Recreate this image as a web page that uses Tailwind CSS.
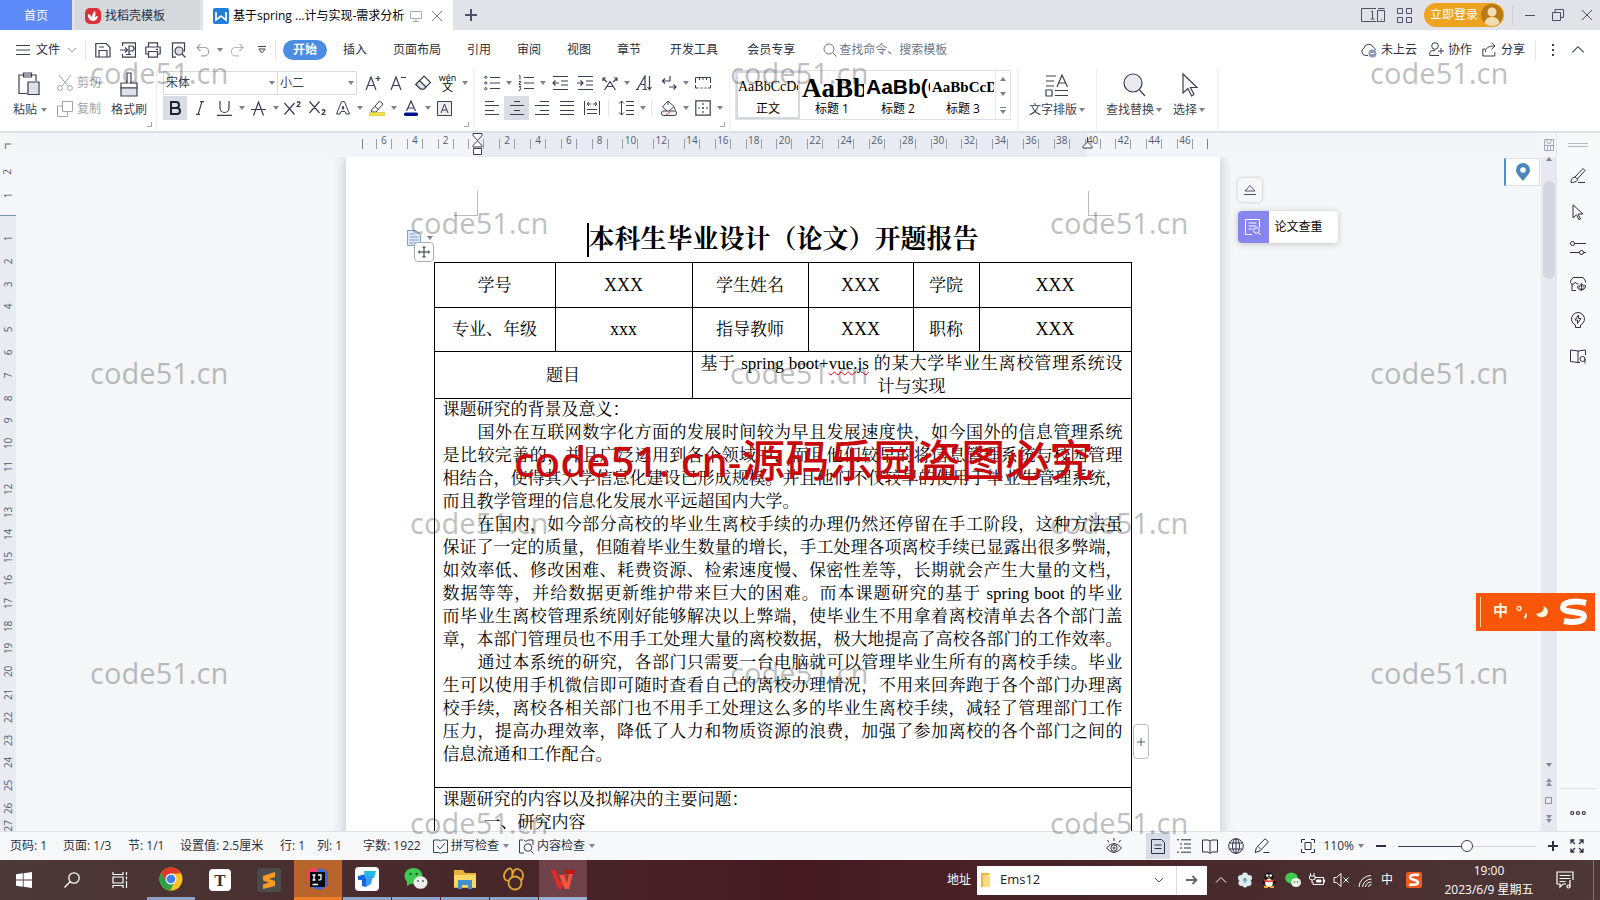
<!DOCTYPE html>
<html lang="zh-CN">
<head>
<meta charset="utf-8">
<title>基于spring ...计与实现-需求分析</title>
<script src="https://cdn.jsdelivr.net/npm/@tailwindcss/browser@4"></script>
</head>
<body class="h-screen overflow-hidden bg-[#f5f6f8] font-['Open_Sans','Noto_Sans_CJK_SC',sans-serif] text-xs text-[#2b3042]">
<svg class="hidden" aria-hidden="true">
  <defs>
    <symbol id="tri" viewBox="0 0 6 4"><path d="M0 0h6L3 4z" fill="#7d8290"/></symbol>
    <symbol id="chev" viewBox="0 0 12 8"><path d="M1 1.500l5 5 5-5" fill="none" stroke="currentColor"/></symbol>
    <symbol id="launch" viewBox="0 0 6 6"><path d="M0 5.500h5.500V0" fill="none" stroke="#7d8290"/></symbol>
  </defs>
</svg>

<div class="relative flex h-screen flex-col overflow-hidden">

<!-- Tab strip -->
<header class="flex h-[30px] shrink-0 items-stretch bg-[#e1e3e8]">
  <button class="w-18 bg-[#5f8afa] pt-px text-white">首页</button>
  <button class="ml-[3px] flex w-[125px] items-center gap-1 bg-[#d6d8dc] pl-[10px] pt-px">
    <svg class="size-4" viewBox="0 0 16 16"><rect width="16" height="16" rx="5" fill="#dd3038"/><path d="M7.500 13C4 12 2.500 9 3 6c2 .5 3.500 2 4 4 0-3 .5-5 3-7 1 3 .5 5-1 7 1.500-1.500 2.500-2 4-2-.5 3-2.500 5-5.500 5z" fill="#fff"/></svg>
    找稻壳模板
  </button>
  <div class="ml-[3px] flex w-[250px] items-center bg-white pl-[10px] pt-px">
    <svg class="size-4 shrink-0" viewBox="0 0 16 16"><rect width="16" height="16" rx="2" fill="#1f7fd6"/><path d="M3 4v8l5-4 5 4V4" fill="none" stroke="#fff" stroke-width="1.700"/></svg>
    <span class="ml-1 whitespace-nowrap text-black">基于spring ...计与实现-需求分析</span>
    <svg class="ml-[6px] size-3 shrink-0 text-[#a7abb5]" viewBox="0 0 12 12" fill="none" stroke="currentColor"><path d="M.5 1.500h11v7H.5zM6 8.500v3M3 11.500h6"/></svg>
    <button class="ml-auto mr-[10px]" aria-label="关闭标签"><svg class="size-3 text-[#7d8290]" viewBox="0 0 12 12"><path d="M1 1l10 10M11 1L1 11" stroke="currentColor"/></svg></button>
  </div>
  <button class="grid w-9 place-items-center" aria-label="新建标签"><svg class="size-3" viewBox="0 0 12 12"><path d="M6 0v12M0 6h12" stroke="#4a5068" stroke-width="2"/></svg></button>
  <div class="ml-auto flex items-center text-[#4a5068]">
    <button aria-label="窗口布局"><svg class="h-[14px] w-6" viewBox="0 0 24 14" fill="none" stroke="currentColor"><path d="M15 .5H.5v13h15M10 4l1.500-1v8M9.500 11h4M16.500 2.500h7v11h-7zM17 .5h6.500M20 11.500h1"/></svg></button>
    <button class="ml-3" aria-label="应用"><svg class="size-[15px]" viewBox="0 0 15 15" fill="none" stroke="currentColor"><path d="M.5.5h5v5h-5zM9.500.5h5v5h-5zM.5 9.500h5v5h-5zM9.500 9.500h5v5h-5z"/></svg></button>
    <button class="ml-3 flex h-6 w-20 items-center justify-between rounded-full bg-[#eea320] pl-[6px] pr-px text-white">立即登录
      <svg class="size-[22px]" viewBox="0 0 22 22"><circle cx="11" cy="11" r="11" fill="#b87a17"/><circle cx="11" cy="8" r="4.500" fill="#f2dcb2"/><path d="M3.500 19c1-8 14-8 15 0-4 4-11 4-15 0z" fill="#f2dcb2"/></svg>
    </button>
    <span class="ml-2 h-5 w-px bg-[#cfd1d7]"></span>
    <button class="ml-3 w-[10px]" aria-label="最小化"><svg class="h-3 w-[10px]" viewBox="0 0 10 12"><path d="M0 6.500h10" stroke="currentColor"/></svg></button>
    <button class="ml-[17px]" aria-label="还原"><svg class="size-3" viewBox="0 0 12 12" fill="none" stroke="currentColor"><path d="M.5 3.500h8v8h-8zM3 3.500v-3h8.500v8h-3"/></svg></button>
    <button class="ml-[17px] mr-[7px]" aria-label="关闭"><svg class="size-3" viewBox="0 0 12 12"><path d="M1 1l10 10M11 1L1 11" stroke="currentColor"/></svg></button>
  </div>
</header>

<!-- Menu bar -->
<nav class="flex h-[39px] shrink-0 items-center bg-white">
  <button class="ml-4 flex items-center gap-[6px]"><svg class="h-3 w-[14px]" viewBox="0 0 14 12"><path d="M0 1.500h14M0 6h14M0 10.500h14" stroke="#3a3f52"/></svg>文件<svg class="ml-px h-2 w-[10px] text-[#8b90a0]"><use href="#chev"/></svg></button>
  <span class="ml-2 h-5 w-px bg-[#e3e5e9]"></span>
  <div class="flex text-[#3a3f52]">
    <button class="ml-1 grid w-[25px] place-items-center" aria-label="保存"><svg class="size-4" viewBox="0 0 16 16" fill="none" stroke="currentColor" stroke-width="1.200"><path d="M.8 1.500h10.500l3.700 4v9.500H.8zM4 15V8.500h8V15M4 5h5"/></svg></button>
    <button class="grid w-[25px] place-items-center" aria-label="输出为PDF"><svg class="size-4" viewBox="0 0 16 16" fill="none" stroke="currentColor" stroke-width="1.200"><path d="M2.500 4V.8h13v14.400h-13V12M0 8h7M5 5.500L7.500 8 5 10.500M9 12.500V4h2.500a2 2 0 010 5H9M6 12.500h5"/></svg></button>
    <button class="grid w-[25px] place-items-center" aria-label="打印"><svg class="size-4" viewBox="0 0 16 16" fill="none" stroke="currentColor" stroke-width="1.200"><path d="M3.500 5V.8h9V5M3.500 12H.8V5h14.400v7h-2.700M3.500 9.500h9v5.700h-9zM11 7.300h2"/></svg></button>
    <button class="grid w-[25px] place-items-center" aria-label="打印预览"><svg class="size-4" viewBox="0 0 16 16" fill="none" stroke="currentColor" stroke-width="1.200"><path d="M6 15.200H2.500V.8h12v9"/><circle cx="9" cy="9" r="4" fill="#d9dce3"/><path d="M12 12l3.500 3.500"/></svg></button>
    <button class="grid w-[25px] place-items-center text-[#a2a5b0]" aria-label="撤销"><svg class="size-[14px]" viewBox="0 0 14 14" fill="none" stroke="currentColor" stroke-width="1.200"><path d="M4.500.8L1 4.500l3.500 3.500M1 4.500h7.500a4 4 0 010 8.300H5"/></svg></button>
    <button class="grid w-[9px] place-items-center" aria-label="撤销列表"><svg class="h-1 w-[6px]"><use href="#tri"/></svg></button>
    <button class="grid w-[25px] place-items-center text-[#b6b9c1]" aria-label="恢复"><svg class="size-[14px]" viewBox="0 0 14 14" fill="none" stroke="currentColor" stroke-width="1.200"><path d="M9.500.8L13 4.500 9.500 8M13 4.500H5.500a4 4 0 000 8.300H9"/></svg></button>
    <button class="grid w-[25px] place-items-center" aria-label="自定义"><svg class="h-2 w-2" viewBox="0 0 8 8" fill="none" stroke="currentColor"><path d="M0 .5h8M.8 3h6.400L4 6.800z"/></svg></button>
  </div>
  <span class="ml-px h-5 w-px bg-[#e3e5e9]"></span>
  <button class="ml-[7px] h-5 w-11 rounded-full bg-[#4a8de2] font-bold text-white">开始</button>
  <button class="ml-4">插入</button>
  <button class="ml-[26px]">页面布局</button>
  <button class="ml-[26px]">引用</button>
  <button class="ml-[26px]">审阅</button>
  <button class="ml-[26px]">视图</button>
  <button class="ml-[26px]">章节</button>
  <button class="ml-[29px]">开发工具</button>
  <button class="ml-[29px]">会员专享</button>
  <label class="ml-7 flex items-center gap-[2px] text-[#71778a]"><svg class="size-[14px]" viewBox="0 0 14 14" fill="none" stroke="currentColor"><circle cx="6" cy="6" r="5"/><path d="M9.500 9.500l4 4"/></svg><input class="w-32 bg-transparent outline-none placeholder:text-[#71778a]" placeholder="查找命令、搜索模板" aria-label="查找命令、搜索模板"></label>
  <div class="ml-auto flex items-center">
    <button class="flex items-center gap-1"><svg class="size-4" viewBox="0 0 16 16" fill="none"><path d="M7 13.500H4.500A4 4 0 013 6a5 5 0 019.500-.5A3.500 3.500 0 0114.500 8" stroke="#3a3f52"/><circle cx="11.500" cy="11.500" r="4" fill="#8d99b8"/><path d="M9.500 11.500h4" stroke="#fff"/></svg>未上云</button>
    <button class="ml-3 flex items-center gap-1"><svg class="size-[15px]" viewBox="0 0 15 15" fill="none" stroke="#3a3f52"><circle cx="6" cy="4" r="3.300"/><path d="M10 13.500H.8V11c0-2 2-2.500 5.200-2.500M12 6v6M9 9h6"/></svg>协作</button>
    <button class="ml-[10px] flex items-center gap-1"><svg class="size-[15px]" viewBox="0 0 15 15" fill="none" stroke="#3a3f52"><path d="M3.500 7H.8v7h12v-4M3.500 10c0-4 3-6 9-6M9.500.8L13 4 9.500 7.500"/></svg>分享</button>
    <span class="ml-[10px] h-5 w-px bg-[#e3e5e9]"></span>
    <button class="ml-[15px]" aria-label="更多"><svg class="h-3 w-1" viewBox="0 0 4 12" fill="#3a3f52"><path d="M1 0h2v2H1zM1 5h2v2H1zM1 10h2v2H1z"/></svg></button>
    <button class="ml-4 mr-[15px]" aria-label="收起功能区"><svg class="h-[9px] w-[14px] rotate-180 text-[#3a3f52]"><use href="#chev"/></svg></button>
  </div>
</nav>

<!-- Ribbon -->
<section class="flex h-16 shrink-0 border-b-2 border-[#dfe1e5] bg-white text-[#3a3f52]">
  <div class="relative flex w-[156px] pl-[13px] pt-[3px]">
    <button class="flex w-[34px] flex-col items-start"><svg class="ml-[5px] h-6 w-[22px]" viewBox="0 0 22 24" fill="none" stroke="currentColor" stroke-width="1.200"><path d="M9 21.500H1V3h17v6M5.500 1h8v4h-8z"/><path d="M10 10h11v12.500H10z" fill="#dfe2e9"/></svg><span class="mt-[6px] flex items-center gap-1">粘贴<svg class="h-1 w-[6px]"><use href="#tri"/></svg></span></button>
    <div class="ml-[10px] flex flex-col justify-start gap-[10px] pt-[3px] text-[#a0a3ad]">
      <button class="flex items-center gap-1"><svg class="size-4" viewBox="0 0 16 16" fill="none" stroke="currentColor"><path d="M2 0l9 11M14 0L5 11"/><circle cx="3" cy="13" r="2.400"/><circle cx="13" cy="13" r="2.400"/></svg>剪切</button>
      <button class="flex items-center gap-1"><svg class="size-4" viewBox="0 0 16 16" fill="none" stroke="currentColor"><path d="M5.500.5h10v10h-10zM5.500 5h-5v10.500h10v-5"/></svg>复制</button>
    </div>
    <button class="ml-[10px] flex flex-col items-center"><svg class="h-[26px] w-5" viewBox="0 0 20 26" fill="none" stroke="currentColor" stroke-width="1.200"><path d="M8 1h4v10h6v5H2v-5h6z"/><path d="M2 16h16v8H2z" fill="#dfe2e9"/></svg><span class="mt-1 whitespace-nowrap">格式刷</span></button>
    <svg class="absolute bottom-1 right-1 size-[5px]"><use href="#launch"/></svg>
  </div>

  <div class="relative w-[317px] border-l border-[#eeeff2] pl-[6px] pt-[2px]">
    <div class="flex h-6 items-center">
      <div class="relative"><select class="h-6 w-[115px] appearance-none border border-[#d9dbe0] bg-white pl-[2px] outline-none" aria-label="字体"><option>宋体</option></select><svg class="absolute right-[3px] top-[10px] h-1 w-[6px]"><use href="#tri"/></svg></div>
      <div class="relative -ml-px"><select class="h-6 w-20 appearance-none border border-[#d9dbe0] bg-white pl-[2px] outline-none" aria-label="字号"><option>小二</option></select><svg class="absolute right-[3px] top-[10px] h-1 w-[6px]"><use href="#tri"/></svg></div>
      <button class="ml-[3px] grid w-[25px] place-items-center" aria-label="增大字号"><svg class="size-4" viewBox="0 0 16 16" fill="none" stroke="currentColor" stroke-width="1.200"><path d="M1 15L6 2l5 13M3 10.500h6M13 1v5M10.500 3.500h5"/></svg></button>
      <button class="grid w-[25px] place-items-center" aria-label="减小字号"><svg class="size-4" viewBox="0 0 16 16" fill="none" stroke="currentColor" stroke-width="1.200"><path d="M1 15L6 2l5 13M3 10.500h6M11 2.500h5"/></svg></button>
      <button class="grid w-[25px] place-items-center" aria-label="清除格式"><svg class="size-4" viewBox="0 0 16 16" fill="none" stroke="currentColor" stroke-width="1.200"><path d="M9 1l6.500 6.500L9 14H5.500L.8 9.500z"/><path d="M4.500 5.500l6.500 6.500L9 14H5.500L.8 9.500z" fill="#dfe2e9"/></svg></button>
      <button class="grid w-[25px] place-items-center" aria-label="拼音指南"><span class="flex flex-col items-center text-[9px] leading-[8px] text-black"><span>wén</span><span class="text-[11px] leading-[10px]">文</span></span></button>
      <button class="grid w-[9px] place-items-center" aria-label="拼音选项"><svg class="h-1 w-[6px]"><use href="#tri"/></svg></button>
    </div>
    <div class="mt-px flex h-6 items-center">
      <button class="grid h-6 w-6 place-items-center bg-[#dadde4]" aria-label="加粗"><svg class="size-[14px]" viewBox="0 0 14 14" fill="none" stroke="#1d2233" stroke-width="2"><path d="M3 1h5a3 3 0 010 6H3zM3 7h6a3 3 0 010 6H3z"/></svg></button>
      <button class="grid w-[25px] place-items-center" aria-label="倾斜"><svg class="size-[14px]" viewBox="0 0 14 14" fill="none" stroke="currentColor" stroke-width="1.200"><path d="M7 .6h4M3 13.400h4M9 .6l-4 13"/></svg></button>
      <button class="grid w-[25px] place-items-center" aria-label="下划线"><svg class="size-[15px]" viewBox="0 0 15 15" fill="none" stroke="currentColor" stroke-width="1.200"><path d="M3 0v7a4.500 4.500 0 009 0V0M0 14.400h15"/></svg></button>
      <button class="grid w-[9px] place-items-center" aria-label="下划线样式"><svg class="h-1 w-[6px]"><use href="#tri"/></svg></button>
      <button class="grid w-[25px] place-items-center" aria-label="删除线"><svg class="size-[15px]" viewBox="0 0 15 15" fill="none" stroke="currentColor" stroke-width="1.200"><path d="M2.500 14.500L7.500 1l5 13.500M0 8.500h15"/></svg></button>
      <button class="grid w-[9px] place-items-center" aria-label="删除线选项"><svg class="h-1 w-[6px]"><use href="#tri"/></svg></button>
      <button class="grid w-[25px] place-items-center" aria-label="上标"><svg class="h-[14px] w-[17px]" viewBox="0 0 17 14" fill="none" stroke="currentColor" stroke-width="1.200"><path d="M.5 2l10 11.500M10.500 2l-10 11.500M13 1.500q1.500-1.500 3 0c.5 1.500-2 2.500-3 4h3.500"/></svg></button>
      <button class="grid w-[25px] place-items-center" aria-label="下标"><svg class="h-[14px] w-[17px]" viewBox="0 0 17 14" fill="none" stroke="currentColor" stroke-width="1.200"><path d="M.5.5l10 11.500M10.500.5L.5 12M13 9.500q1.500-1.500 3 0c.5 1.500-2 2.500-3 4h3.500"/></svg></button>
      <button class="grid w-[25px] place-items-center" aria-label="文字效果"><svg class="size-[14px]" viewBox="0 0 14 14" fill="none" stroke="currentColor"><path d="M5.500.7h3L13.500 13H10L9 10.500H5L4 13H.5zM6 8h2L7 5z"/></svg></button>
      <button class="grid w-[9px] place-items-center" aria-label="文字效果选项"><svg class="h-1 w-[6px]"><use href="#tri"/></svg></button>
      <button class="grid w-[25px] place-items-center" aria-label="突出显示"><svg class="size-4" viewBox="0 0 16 16" fill="none" stroke="currentColor"><path d="M3 9.500L10.500 1l3.500 3-7 8-4.500 0zM6 6.500l3.500 3"/><rect y="12.500" width="16" height="3.500" rx="1.500" fill="#f2e443" stroke="#b7a92a" stroke-width=".5"/></svg></button>
      <button class="grid w-[9px] place-items-center" aria-label="突出显示颜色"><svg class="h-1 w-[6px]"><use href="#tri"/></svg></button>
      <button class="grid w-[25px] place-items-center" aria-label="字体颜色"><svg class="h-4 w-[14px]" viewBox="0 0 14 16" fill="none" stroke="currentColor" stroke-width="1.200"><path d="M2.500 11L7 1l4.500 10M4 8h6"/><rect y="12.500" width="14" height="3.500" rx="1.500" fill="#00138c" stroke="none"/></svg></button>
      <button class="grid w-[9px] place-items-center" aria-label="更多字体颜色"><svg class="h-1 w-[6px]"><use href="#tri"/></svg></button>
      <button class="grid w-[25px] place-items-center" aria-label="字符底纹"><svg class="size-[15px]" viewBox="0 0 15 15" fill="none" stroke="currentColor"><path d="M.5.5h14v14H.5z" fill="#eceef2"/><path d="M4 12l3.500-9L11 12M5 9h5"/></svg></button>
    </div>
    <svg class="absolute bottom-1 right-1 size-[5px]"><use href="#launch"/></svg>
  </div>

  <div class="relative w-[256px] border-l border-[#eeeff2] pl-[5px] pt-[2px]">
    <div class="flex h-6 items-center">
      <button class="grid w-[25px] place-items-center" aria-label="项目符号"><svg class="size-4" viewBox="0 0 16 16" fill="none" stroke="currentColor"><path d="M6 2.500h10M6 8h10M6 13.500h10"/><circle cx="1.800" cy="2.300" r="1.100"/><circle cx="1.800" cy="8" r="1.100"/><circle cx="1.800" cy="13.700" r="1.100"/></svg></button>
      <button class="grid w-[9px] place-items-center" aria-label="项目符号选项"><svg class="h-1 w-[6px]"><use href="#tri"/></svg></button>
      <button class="grid w-[25px] place-items-center" aria-label="编号"><svg class="size-4" viewBox="0 0 16 16" fill="none" stroke="currentColor"><path d="M6 2.500h10M6 8h10M6 13.500h10M1 1l1-.5v4M.8 6.500h2L1 9.500h2M.8 11.500h2l-1 1.500 1 .5-1 1.800H.8"/></svg></button>
      <button class="grid w-[9px] place-items-center" aria-label="编号选项"><svg class="h-1 w-[6px]"><use href="#tri"/></svg></button>
      <button class="grid w-[25px] place-items-center" aria-label="减少缩进量"><svg class="size-4" viewBox="0 0 16 16" fill="none" stroke="currentColor" stroke-width="1.200"><path d="M1 1.500h15M9 6h7M9 10h7M1 14.500h15M1 8h6M3.500 5.500L1 8l2.500 2.500"/></svg></button>
      <button class="grid w-[25px] place-items-center" aria-label="增加缩进量"><svg class="size-4" viewBox="0 0 16 16" fill="none" stroke="currentColor" stroke-width="1.200"><path d="M1 1.500h15M9 6h7M9 10h7M1 14.500h15M0 8h6M3.500 5.500L6 8l-2.500 2.500"/></svg></button>
      <button class="grid w-[25px] place-items-center" aria-label="中文版式"><svg class="size-4" viewBox="0 0 16 16" fill="none" stroke="currentColor" stroke-width="1.200"><path d="M2.500 15L8 6.500l5.500 8.500M5 11.500h6M5 7L1 3.500M11 7l4-3.500M1 6V3h3M15 6V3h-3"/></svg></button>
      <button class="grid w-[9px] place-items-center" aria-label="中文版式选项"><svg class="h-1 w-[6px]"><use href="#tri"/></svg></button>
      <button class="grid w-[25px] place-items-center" aria-label="排序"><svg class="size-4" viewBox="0 0 16 16" fill="none" stroke="currentColor" stroke-width="1.200"><path d="M0 14.500h3M1.500 14L9 1v13.500M6.500 14.500H11M5 9.500h4M13.500 1v13M11.500 12l2 2.500 2-2.500"/></svg></button>
      <button class="grid w-[25px] place-items-center" aria-label="段落标记"><svg class="size-4" viewBox="0 0 16 16" fill="none" stroke="currentColor" stroke-width="1.200"><path d="M9 1v5H2M4 3.500L1.500 6 4 8.500M8 12h7M12.500 9.500L15 12l-2.500 2.500"/></svg></button>
      <button class="grid w-[9px] place-items-center" aria-label="段落标记选项"><svg class="h-1 w-[6px]"><use href="#tri"/></svg></button>
      <button class="grid w-[25px] place-items-center" aria-label="制表位"><svg class="size-4" viewBox="0 0 16 16" fill="none" stroke="currentColor"><path d="M.5 8V2.500h15V8M4.500 2.500V5M8 2.500V5M11.500 2.500V5M.5 10v3h3M5.500 13h2M9.500 13h2M13 13h2.500v-3"/></svg></button>
    </div>
    <div class="mt-px flex h-6 items-center">
      <button class="grid w-[25px] place-items-center" aria-label="左对齐"><svg class="size-[14px]" viewBox="0 0 14 14" stroke="currentColor"><path d="M0 .5h9M0 4.500h14M0 9.500h9M0 13.500h14"/></svg></button>
      <button class="grid h-6 w-[25px] place-items-center bg-[#dadde4]" aria-label="居中对齐"><svg class="size-[14px]" viewBox="0 0 14 14" stroke="currentColor"><path d="M4 .5h6M0 4.500h14M4 9.500h6M0 13.500h14"/></svg></button>
      <button class="grid w-[25px] place-items-center" aria-label="右对齐"><svg class="size-[14px]" viewBox="0 0 14 14" stroke="currentColor"><path d="M5 .5h9M0 4.500h14M5 9.500h9M0 13.500h14"/></svg></button>
      <button class="grid w-[25px] place-items-center" aria-label="两端对齐"><svg class="size-[14px]" viewBox="0 0 14 14" stroke="currentColor"><path d="M0 .5h14M0 4.500h14M0 9.500h14M0 13.500h14"/></svg></button>
      <button class="grid w-[25px] place-items-center" aria-label="分散对齐"><svg class="size-4" viewBox="0 0 16 16" fill="none" stroke="currentColor"><path d="M.5 1v14M15.500 1v14M3 4h4M9 4h4M5 2L3 4l2 2M11 2l2 2-2 2M3 9.500h10M3 13.500h10"/></svg></button>
      <span class="mx-[4px] h-4 w-px bg-[#e3e5e9]"></span>
      <button class="grid w-[25px] place-items-center" aria-label="行距"><svg class="size-4" viewBox="0 0 16 16" fill="none" stroke="currentColor"><path d="M8 1.500h8M8 5.500h8M8 10.500h8M8 14.500h8M3.500 1v14M1 3.500L3.500 1 6 3.500M1 12.500L3.500 15 6 12.500"/></svg></button>
      <button class="grid w-[9px] place-items-center" aria-label="行距选项"><svg class="h-1 w-[6px]"><use href="#tri"/></svg></button>
      <span class="mx-[4px] h-4 w-px bg-[#e3e5e9]"></span>
      <button class="grid w-[25px] place-items-center" aria-label="底纹颜色"><svg class="size-4" viewBox="0 0 16 16" fill="none" stroke="currentColor"><path d="M7 1L1.500 7 7 12l6-5.500zM7 1v4M13 6.500l1.500 4"/><rect x=".5" y="11" width="15" height="4.500" rx="2" fill="#eceef2"/><path d="M5 15l5-4" stroke="#d0556b"/></svg></button>
      <button class="grid w-[9px] place-items-center" aria-label="更多底纹颜色"><svg class="h-1 w-[6px]"><use href="#tri"/></svg></button>
      <button class="grid w-[25px] place-items-center" aria-label="边框"><svg class="size-4" viewBox="0 0 16 16" fill="none" stroke="currentColor" stroke-width="1.200"><path d="M.8.8h14.400v14.400H.8z"/><path d="M8 3v10M3 8h10" stroke-dasharray="2 2"/></svg></button>
      <button class="grid w-[9px] place-items-center" aria-label="边框选项"><svg class="h-1 w-[6px]"><use href="#tri"/></svg></button>
    </div>
    <svg class="absolute bottom-1 right-1 size-[5px]"><use href="#launch"/></svg>
  </div>

  <div class="w-[288px] border-l border-[#eeeff2] pl-[5px] pt-px">
    <div class="flex h-[50px] w-[276px] border border-[#dfe1e6] text-center text-black">
      <button class="flex w-16 flex-col overflow-hidden border-2 border-[#d5d8df]"><span class="h-[28px] pt-[5px] font-['Liberation_Serif',serif] text-[14px]">AaBbCcDd</span><span class="self-center leading-4">正文</span></button>
      <button class="flex w-16 flex-col overflow-hidden pt-[2px]"><span class="h-[28px] pl-[2px] font-['Liberation_Serif',serif] text-[27px] font-bold leading-[30px]">AaBbC</span><span class="self-center leading-4">标题 1</span></button>
      <button class="ml-[2px] flex w-16 flex-col overflow-hidden pt-[2px]"><span class="h-[28px] font-['Liberation_Sans',sans-serif] text-[21px] font-bold leading-[28px]">AaBb(C</span><span class="self-center leading-4">标题 2</span></button>
      <button class="ml-[2px] flex w-[62px] flex-col overflow-hidden pt-[2px]"><span class="h-[28px] font-['Liberation_Serif',serif] text-[15px] font-bold leading-[28px]">AaBbCcDd</span><span class="self-center leading-4">标题 3</span></button>
      <div class="ml-auto flex w-[15px] flex-col items-center justify-around border-l border-[#e6e8ec]">
        <button aria-label="上一行"><svg class="h-1 w-[6px] rotate-180"><use href="#tri"/></svg></button>
        <button aria-label="下一行"><svg class="h-1 w-[6px]"><use href="#tri"/></svg></button>
        <button aria-label="展开样式"><svg class="h-[7px] w-[6px]" viewBox="0 0 6 7"><path d="M0 .5h6" stroke="#7d8290"/><path d="M0 3h6L3 7z" fill="#7d8290"/></svg></button>
      </div>
    </div>
  </div>

  <div class="flex w-[79px] justify-center border-l border-[#eeeff2] pt-[3px]">
    <button class="flex flex-col items-center"><svg class="h-[26px] w-6" viewBox="0 0 24 26" fill="none" stroke="currentColor" stroke-width="1.200"><path d="M1 4h10M1 9h8M1 14h8M12 15l5-12 5.500 12M14 11h7M1 18h6v6H1zM10 18.500h13M10 23.500h13"/></svg><span class="mt-1 flex items-center gap-[2px]">文字排版<svg class="h-1 w-[6px]"><use href="#tri"/></svg></span></button>
  </div>
  <div class="flex gap-[11px] border-l border-r border-[#eeeff2] pl-[9px] pr-[12px] pt-[3px]">
    <button class="flex flex-col items-center"><svg class="h-[26px] w-6" viewBox="0 0 24 26" fill="none" stroke="currentColor" stroke-width="1.200"><circle cx="11" cy="11" r="9" fill="#e8eaef"/><path d="M17.500 18l5.500 6"/></svg><span class="mt-1 flex items-center gap-[2px]">查找替换<svg class="h-1 w-[6px]"><use href="#tri"/></svg></span></button>
    <button class="flex flex-col items-center"><svg class="h-[26px] w-5" viewBox="0 0 20 26" fill="none" stroke="currentColor" stroke-width="1.200"><path d="M4 2v19l5-4.500L12.500 24l2.500-1.500-3.500-7H18z"/></svg><span class="mt-1 flex items-center gap-[2px]">选择<svg class="h-1 w-[6px]"><use href="#tri"/></svg></span></button>
  </div>
</section>

<!-- Work area -->
<main class="flex min-h-0 flex-1">
  <!-- Vertical ruler -->
  <aside class="flex w-4 shrink-0 flex-col overflow-hidden bg-[#f5f6f8] text-[10px] text-[#555b70]">
    <div class="grid h-[26px] shrink-0 place-items-center"><svg class="size-2" viewBox="0 0 8 8"><path d="M1.500 7V2H7" stroke="#8b90a0" stroke-width="1.500" fill="none"/></svg></div>
    <div class="flex h-[57px] shrink-0 flex-col border-b border-[#7f93ab] pt-px">
      <span class="grid h-6 place-items-center -rotate-90">2</span>
      <span class="grid h-[23px] place-items-center -rotate-90">1</span>
    </div>
    <div id="vruler" class="flex min-h-0 flex-1 flex-col bg-[#e8ebf0] pt-[11px]"></div>
  </aside>

  <div class="relative flex min-w-0 flex-1 flex-col">
    <!-- Horizontal ruler -->
    <div class="grid h-6 shrink-0 grid-cols-[41fr_874px_40fr] bg-[#f4f5f8]">
      <span></span>
      <div class="relative flex items-start bg-[linear-gradient(to_right,#f4f5f8_131px,#e8ebf2_131px,#e8ebf2_741px,#f4f5f8_741px)] pl-4 pr-3 pt-[6px] text-[10px] leading-[10px] text-[#555b70]">
        <span class="h-[10px] w-px bg-[#7d8290]"></span>
        <div id="hruler" class="flex flex-1 px-[6px]"></div>
        <span class="h-[10px] w-px bg-[#7d8290]"></span>
        <svg class="absolute left-[126px] top-0 h-[22px] w-[11px]" viewBox="0 0 11 22" fill="#fff" stroke="#3a3f52"><path d="M1 .5h9v2L5.500 7.500 1 2.500zM5.500 8L1 12.500V14h9v-1.500zM1.500 15.500h8v6h-8z"/></svg>
        <svg class="absolute left-[736px] top-1 h-3 w-[11px]" viewBox="0 0 11 12" fill="#fff" stroke="#3a3f52"><path d="M5.500 5L1 9.500v1.500h9V9.500zM5.500 0v5"/></svg>
      </div>
    </div>

    <div class="grid min-h-0 flex-1 grid-cols-[41fr_874px_40fr] overflow-hidden">
      <span></span>
      <article class="relative h-[1200px] bg-white font-['Liberation_Serif','Noto_Serif_CJK_SC','Noto_Sans_CJK_SC',serif] text-black shadow-[0_0_12px_rgba(40,45,60,0.28)]">
        <div class="flex justify-between px-[108px] pt-[34px]">
          <span class="h-[25px] w-6 border-b border-r border-[#b9bbc2]"></span>
          <span class="h-[25px] w-6 border-b border-l border-[#b9bbc2]"></span>
        </div>
        <div class="flex h-[46px] items-center justify-center pt-[2px]">
          <h1 class="border-l-2 border-black text-[26px] font-bold leading-[34px]">本科生毕业设计（论文）开题报告</h1>
        </div>
        <table class="mx-[88px] w-[698px] table-fixed border-collapse text-center text-[17px] leading-[23px] [&_td]:border [&_td]:border-black [&_td]:p-0">
          <colgroup><col class="w-[121px]"><col class="w-[137px]"><col class="w-[116px]"><col class="w-[105px]"><col class="w-[66px]"><col></colgroup>
          <tbody>
            <tr class="h-[45px]"><td>学号</td><td class="text-[18px]">XXX</td><td>学生姓名</td><td class="text-[18px]">XXX</td><td>学院</td><td class="text-[18px]">XXX</td></tr>
            <tr class="h-[44px]"><td>专业、年级</td><td class="text-[18px]">xxx</td><td>指导教师</td><td class="text-[18px]">XXX</td><td>职称</td><td class="text-[18px]">XXX</td></tr>
            <tr class="h-[47px]"><td colspan="2">题目</td><td colspan="4"><div class="px-2 [text-align-last:justify]">基于 spring boot+<span class="underline decoration-red-600 decoration-wavy decoration-1 underline-offset-2">vue.js</span> 的某大学毕业生离校管理系统设</div>计与实现</td></tr>
            <tr class="h-[389px]"><td colspan="6" class="align-top">
              <div class="mx-2 -mt-px text-left [&_span]:block [&_span]:[text-align-last:justify]">
                <p>课题研究的背景及意义：</p>
                <p><span class="pl-[35px]">国外在互联网数字化方面的发展时间较为早且发展速度快，如今国外的信息管理系统</span><span>是比较完善的，并且广泛运用到各个领域中，而且他们较早的将信息管理系统与校园管理</span><span>相结合，使得其大学信息化建设已形成规模。并且他们不仅较早的使用于毕业生管理系统，</span>而且教学管理的信息化发展水平远超国内大学。</p>
                <p><span class="pl-[35px]">在国内，如今部分高校的毕业生离校手续的办理仍然还停留在手工阶段，这种方法虽</span><span>保证了一定的质量，但随着毕业生数量的增长，手工处理各项离校手续已显露出很多弊端，</span><span>如效率低、修改困难、耗费资源、检索速度慢、保密性差等，长期就会产生大量的文档，</span><span>数据等等，并给数据更新维护带来巨大的困难。而本课题研究的基于 spring boot 的毕业</span><span>而毕业生离校管理系统刚好能够解决以上弊端，使毕业生不用拿着离校清单去各个部门盖</span><span>章，本部门管理员也不用手工处理大量的离校数据，极大地提高了高校各部门的工作效率。</span></p>
                <p><span class="pl-[35px]">通过本系统的研究，各部门只需要一台电脑就可以管理毕业生所有的离校手续。毕业</span><span>生可以使用手机微信即可随时查看自己的离校办理情况，不用来回奔跑于各个部门办理离</span><span>校手续，离校各相关部门也不用手工处理这么多的毕业生离校手续，减轻了管理部门工作</span><span>压力，提高办理效率，降低了人力和物质资源的浪费，加强了参加离校的各个部门之间的</span>信息流通和工作配合。</p>
              </div>
            </td></tr>
            <tr class="h-[300px]"><td colspan="6" class="align-top">
              <div class="ml-2 text-left"><p>课题研究的内容以及拟解决的主要问题：</p><p class="pl-[41px]">一、研究内容</p></div>
            </td></tr>
          </tbody>
        </table>
        <svg class="absolute left-[61px] top-[73px] h-4 w-[14px]" viewBox="0 0 14 16" fill="#dfe9f5" stroke="#7fa3cf"><path d="M.5.5h8l5 4v11H.5zM2.500 4h5M2.500 7h9M2.500 10h9M2.500 13h9"/></svg>
        <svg class="absolute left-[81px] top-[79px] h-1 w-[6px]"><use href="#tri"/></svg>
        <button class="absolute left-[68px] top-[85px] grid size-5 place-items-center rounded-sm border border-[#a9abb0] bg-white" aria-label="移动表格"><svg class="size-[14px]" viewBox="0 0 14 14" fill="#666b75" stroke="#666b75"><path d="M7 2v10M2 7h10" stroke-width="1.500"/><path d="M7 .5l2 2.500H5zM7 13.500l2-2.500H5zM.5 7L3 5v4zM13.500 7L11 5v4z" stroke="none"/></svg></button>
        <button class="absolute left-[787px] top-[567px] grid h-[35px] w-4 place-items-center rounded-sm border border-[#b9bbc2] bg-white" aria-label="添加行"><svg class="size-2" viewBox="0 0 8 8"><path d="M4 0v8M0 4h8" stroke="#555b70"/></svg></button>
      </article>
      <div class="flex items-start justify-between pl-[18px]">
        <div class="pt-[21px]">
          <button class="grid size-6 place-items-center rounded bg-[#f7f7f9] shadow-[0_0_3px_rgba(0,0,0,0.25)]" aria-label="收起"><svg class="h-3 w-3" viewBox="0 0 12 12" fill="none" stroke="#4a5068"><path d="M1 7L6 1.500 11 7zM0 10.500h12"/></svg></button>
          <button class="mt-[9px] flex h-8 w-[100px] items-center overflow-hidden rounded bg-white text-black shadow-[0_1px_6px_rgba(0,0,0,0.22)]"><span class="grid h-8 w-[31px] place-items-center bg-[#8785ee]"><svg class="size-4" viewBox="0 0 16 16" fill="none" stroke="#fff"><path d="M7 15.500H.5V.5h14v8M3.500 4h8M3.500 7h8M3.500 10h4"/><circle cx="11.500" cy="11.500" r="2.800"/><path d="M13.500 13.500l2.500 2.500"/></svg></span><span class="ml-[6px]">论文查重</span></button>
        </div>
        <button class="mr-px mt-px grid h-7 w-9 place-items-center border border-l-2 border-[#dde0e6] border-l-[#4d8fc9] bg-white" aria-label="定位"><svg class="h-[18px] w-[14px]" viewBox="0 0 14 18"><path d="M7 0a7 7 0 00-7 7c0 4 4 7 7 11 3-4 7-7 7-11a7 7 0 00-7-7z" fill="#4b87bb"/><circle cx="7" cy="7" r="2.800" fill="#fff"/></svg></button>
      </div>
    </div>
  </div>

  <!-- Scroll bar -->
  <div class="flex w-[15px] shrink-0 flex-col items-center bg-[#e8e9f0] text-[#8b8fa5]">
    <div class="grid h-6 w-full place-items-center bg-[#f5f6f8]"><svg class="h-3 w-[10px]" viewBox="0 0 10 12" fill="none" stroke="#a0a6bb"><path d="M.5.5h9v11h-9zM3 .5v3l2 1.500 2-1.500v-3M.5 6.500h9M3.500 6.500v5M6.500 6.500v5"/></svg></div>
    <svg class="h-1 w-[6px] rotate-180"><use href="#tri"/></svg>
    <div class="mt-5 h-[98px] w-3 rounded-full bg-[#d5d6df]"></div>
    <div class="mt-auto flex flex-col items-center gap-[11px] pb-2">
      <svg class="h-1 w-[6px]"><use href="#tri"/></svg>
      <svg class="h-2 w-[6px]" viewBox="0 0 6 8" fill="currentColor"><path d="M0 4h6L3 0zM0 8h6L3 4z"/></svg>
      <svg class="size-[7px]" viewBox="0 0 7 7"><path d="M.5.5h6v6h-6z" fill="none" stroke="currentColor"/></svg>
      <svg class="h-2 w-[6px]" viewBox="0 0 6 8" fill="currentColor"><path d="M0 0h6L3 4zM0 4h6L3 8z"/></svg>
    </div>
  </div>

  <!-- Side tools -->
  <aside class="flex w-11 shrink-0 flex-col items-center border-l border-[#e3e5ea] bg-[#f7f8fa] pr-[2px] text-[#2b3042]">
    <span class="mt-[10px] h-1 w-5 border-y border-[#b9bbc2]"></span>
    <div class="mt-[21px] flex flex-col gap-5">
      <button class="size-4" aria-label="样式和格式"><svg class="size-4" viewBox="0 0 16 16" fill="none" stroke="currentColor"><path d="M5 9l8-8.500 2 2L7.500 11M1 14.500c0-3 1-5 4-5.500l2.500 2c0 2-2 3.500-6.500 3.500zM8 14.500h7"/></svg></button>
      <button class="size-4" aria-label="选择窗格"><svg class="size-4" viewBox="0 0 16 16" fill="none" stroke="currentColor"><path d="M3 .8v13l3.500-3 2.500 5 1.500-.8-2.300-5H13z"/></svg></button>
      <button class="size-4" aria-label="属性"><svg class="size-4" viewBox="0 0 16 16" fill="none" stroke="currentColor"><circle cx="2.500" cy="3.500" r="2"/><path d="M4.500 3.500H16M0 12.500h9.500M13.500 12.500H16"/><circle cx="11.500" cy="12.500" r="2"/></svg></button>
      <button class="size-4" aria-label="资源"><svg class="size-4" viewBox="0 0 16 16" fill="none" stroke="currentColor"><path d="M6 14.500H2V8C.5 7.500.5 6 .5 5L3 1.500h10L15.500 5v1.500M2 8c2 .5 3-.5 3.500-2 .5 2 2 2 3 2"/><path d="M7.500 10.500c0 5 8 5 8-1-1-.3-2 0-2.300 1 0-1.500-.7-2.500-1.700-3-1 .7-1.500 1.700-1.500 3-.8-.4-1.700-.4-2.500 0zM11.500 8v6M9 11.500l2.500 2.500 2.500-2.500"/></svg></button>
      <button class="size-4" aria-label="智能推荐"><svg class="size-4" viewBox="0 0 16 16" fill="none" stroke="currentColor"><path d="M5.500 13A6.500 6.500 0 1110.500 13v2.500h-5zM8.500 3L5 8h2.500v3.500L11 6.500H8.500z"/></svg></button>
      <button class="size-4" aria-label="查找"><svg class="size-4" viewBox="0 0 16 16" fill="none" stroke="currentColor"><path d="M15.500 7V2L8 3 .5 2v11.500L8 14.500V3M8 14.500h2"/><circle cx="12.500" cy="11" r="2.500"/><path d="M15 11v4.500"/></svg></button>
    </div>
    <span class="mt-auto h-px w-9 bg-[#dcdee4]"></span>
    <button class="mb-[15px] mt-[21px]" aria-label="更多"><svg class="h-[6px] w-4" viewBox="0 0 16 6" fill="none" stroke="currentColor" stroke-width="1.200"><circle cx="2.200" cy="3" r="1.500"/><circle cx="8" cy="3" r="1.500"/><circle cx="13.800" cy="3" r="1.500"/></svg></button>
  </aside>
</main>

<!-- Status bar -->
<footer class="flex h-[29px] shrink-0 items-center border-t border-[#dfe1e6] bg-[#f7f8fa] pl-[10px] text-[#2b3042]">
  <span class="w-[53px] whitespace-nowrap">页码: 1</span>
  <span class="w-[65px] whitespace-nowrap">页面: 1/3</span>
  <span class="w-[52px] whitespace-nowrap">节: 1/1</span>
  <span class="w-[100px] whitespace-nowrap">设置值: 2.5厘米</span>
  <span class="w-[37px] whitespace-nowrap">行: 1</span>
  <span class="w-[46px] whitespace-nowrap">列: 1</span>
  <span class="w-[70px] whitespace-nowrap">字数: 1922</span>
  <button class="flex items-center gap-[3px] whitespace-nowrap"><svg class="size-[15px]" viewBox="0 0 15 15" fill="none" stroke="#3a4a6b"><path d="M6 1H.5v12.500H6l1.500 1 1.500-1h5.500V1H9L7.500 2 6 1M4 7l3 3 5-6"/></svg>拼写检查<svg class="ml-px h-1 w-[6px]"><use href="#tri"/></svg></button>
  <button class="ml-[10px] flex items-center gap-[3px] whitespace-nowrap"><svg class="size-[15px]" viewBox="0 0 15 15" fill="none" stroke="#3a3f52"><path d="M4 1H.5v13H5M9 1h5v5M5 1l2 1.500L9 1"/><circle cx="9" cy="8.500" r="3.800"/><path d="M11.500 11.500l3 3"/></svg>内容检查<svg class="ml-px h-1 w-[6px]"><use href="#tri"/></svg></button>
  <div class="ml-auto flex items-center">
    <button class="grid w-8 place-items-center" aria-label="护眼模式"><svg class="size-4" viewBox="0 0 16 16" fill="none" stroke="currentColor"><path d="M.5 10q7.500-9 15 0-7.500 9-15 0zM3 4.500L1.500 2M8 3V0M13 4.500L14.500 2"/><circle cx="8" cy="10" r="3.200"/><circle cx="8" cy="10" r="1"/></svg></button>
    <button class="ml-4 grid h-[26px] w-6 place-items-center bg-[#d6dce8]" aria-label="页面视图"><svg class="h-[15px] w-[14px]" viewBox="0 0 14 15" fill="none" stroke="currentColor"><path d="M.5.5h10l3 3v11H.5zM3.500 6h7M3.500 9.500h7"/></svg></button>
    <button class="ml-px grid w-[26px] place-items-center" aria-label="大纲"><svg class="size-[14px]" viewBox="0 0 14 14" stroke="currentColor"><path d="M0 .8h2M4 .8h10M3 5h2M7 5h7M3 9h2M7 9h7M0 13.200h2M4 13.200h10"/></svg></button>
    <button class="grid w-[26px] place-items-center" aria-label="阅读版式"><svg class="h-[15px] w-4" viewBox="0 0 16 15" fill="none" stroke="currentColor"><path d="M.5 1H6l2 1 2-1h5.500v12H10l-2 1.500L6 13H.5zM8 2v12"/></svg></button>
    <button class="grid w-[26px] place-items-center" aria-label="Web版式"><svg class="size-4" viewBox="0 0 16 16" fill="none" stroke="currentColor"><circle cx="8" cy="8" r="7.300"/><ellipse cx="8" cy="8" rx="3.500" ry="7.300"/><path d="M8 .5v15M1.500 5h13M1.500 11h13"/></svg></button>
    <button class="grid w-[26px] place-items-center" aria-label="写作模式"><svg class="size-4" viewBox="0 0 16 16" fill="none" stroke="currentColor"><path d="M1 14.500l1.500-5L11 .8l3.500 3-8.500 9zM9.500 14.500h6M4 8.500l2.500 2.500"/></svg></button>
    <button class="ml-5 grid w-[26px] place-items-center" aria-label="最佳显示比例"><svg class="size-[14px]" viewBox="0 0 14 14" fill="none" stroke="currentColor"><path d="M.5 4V.5H4M10 .5h3.500V4M13.500 10v3.500H10M4 13.500H.5V10M4 3.500h6v7H4z"/></svg></button>
    <button class="ml-[2px] flex items-center gap-1">110%<svg class="h-1 w-[6px]"><use href="#tri"/></svg></button>
    <button class="ml-3" aria-label="缩小"><svg class="size-[10px]" viewBox="0 0 10 10"><path d="M0 5h10" stroke="currentColor" stroke-width="2"/></svg></button>
    <input type="range" min="0" max="100" value="50" aria-label="显示比例" class="ml-3 h-4 w-[138px] appearance-none bg-[linear-gradient(to_right,#3a3f52_50%,#cfd2da_50%)] bg-[length:100%_1px] bg-center bg-no-repeat [&::-webkit-slider-thumb]:size-3 [&::-webkit-slider-thumb]:appearance-none [&::-webkit-slider-thumb]:rounded-full [&::-webkit-slider-thumb]:border [&::-webkit-slider-thumb]:border-[#3a3f52] [&::-webkit-slider-thumb]:bg-white">
    <button class="ml-3" aria-label="放大"><svg class="size-[10px]" viewBox="0 0 10 10"><path d="M0 5h10M5 0v10" stroke="currentColor" stroke-width="2"/></svg></button>
    <button class="ml-3 mr-4" aria-label="全屏显示"><svg class="size-[14px]" viewBox="0 0 14 14" fill="none" stroke="currentColor" stroke-width="1.300"><path d="M1 4.500V1h3.500M1 1l4 4M9.500 1H13v3.500M13 1L9 5M13 9.500V13H9.500M13 13L9 9M4.500 13H1V9.500M1 13l4-4"/></svg></button>
  </div>
</footer>

<!-- Task bar -->
<div class="flex h-10 shrink-0 items-stretch bg-linear-to-r from-[#4b3a37] via-[#451a22] to-[#4c3836] text-white">
  <button class="grid w-12 place-items-center" aria-label="开始菜单"><svg class="size-4" viewBox="0 0 16 16" fill="#fff"><path d="M0 2.300L6.800 1.300v6.300H0zM7.600 1.200L16 0v7.600H7.600zM0 8.400h6.800v6.300L0 13.700zM7.600 8.400H16V16l-8.400-1.200z"/></svg></button>
  <button class="grid w-12 place-items-center" aria-label="搜索"><svg class="size-4" viewBox="0 0 16 16" fill="none" stroke="#fff" stroke-width="1.300"><circle cx="10" cy="6" r="5.200"/><path d="M6 9.800L.5 15.500"/></svg></button>
  <button class="grid w-12 place-items-center" aria-label="任务视图"><svg class="size-4" viewBox="0 0 16 16" fill="none" stroke="#fff" stroke-width="1.200"><path d="M1 0v2.500h10V0M1 5h10v6H1zM1 16v-2.500h10V16M14.500 0v3M14.500 4.500v3M14.500 9v7"/></svg></button>
  <div class="flex gap-px pl-[3px]">
    <button class="grid w-12 place-items-center border-b-[3px] border-[#8ea3c6]" aria-label="Chrome"><svg class="size-6" viewBox="0 0 24 24"><circle cx="12" cy="12" r="11.500" fill="#f7c51e"/><path d="M12 12L2 6.200A11.500 11.500 0 0011 23.500l5-9z" fill="#2da04a"/><path d="M12 6.500h10a11.500 11.500 0 00-20-.3l5 8z" fill="#e0392c"/><circle cx="12" cy="12" r="5.500" fill="#fff"/><circle cx="12" cy="12" r="4.300" fill="#3d7ef0"/></svg></button>
    <button class="grid w-12 place-items-center"><span class="grid size-[22px] place-items-center rounded bg-white font-['Liberation_Serif',serif] text-[17px] font-bold leading-none text-[#333]">T</span></button>
    <button class="grid w-12 place-items-center" aria-label="Sublime Text"><svg class="size-6" viewBox="0 0 24 24"><rect width="24" height="24" rx="3" fill="#4b4b4b"/><path d="M18 4v5l-6 2 6 2v5L6 21v-4.500l6-2-6-2V8z" fill="#f59c22"/></svg></button>
    <button class="grid w-12 place-items-center border-b-[3px] border-[#ef7d24] bg-[#b8642c]" aria-label="IntelliJ IDEA"><svg class="size-6" viewBox="0 0 24 24"><path d="M2 2l9-1 4 5-8 12-5-5z" fill="#f0415e"/><path d="M13 1l9 4v13l-8 5-9-3z" fill="#2e6ee6"/><rect x="4" y="5" width="15" height="15" fill="#0b0b12"/><path d="M6.500 8h3M8 8v5M6.500 13h3M12 8h3v4q0 1-2.500 1M6.500 17.500H12" stroke="#fff" stroke-width="1.300" fill="none"/></svg></button>
    <button class="grid w-12 place-items-center border-b-[3px] border-[#8ea3c6]" aria-label="待办"><svg class="size-6" viewBox="0 0 24 24"><rect width="24" height="24" rx="4" fill="#fff"/><path d="M3 9l8-2v13l-4-1v-6H3z" fill="#1467e0"/><path d="M9 4h12l-2 7h-9z" fill="#23b9e9"/><path d="M11 9h7l-2 8-5 3z" fill="#3a9ff0"/></svg></button>
    <button class="grid w-12 place-items-center border-b-[3px] border-[#8ea3c6]" aria-label="微信"><svg class="size-6" viewBox="0 0 24 24"><ellipse cx="9.500" cy="9" rx="9" ry="8" fill="#3ecb52"/><path d="M3 14v5l5-3z" fill="#3ecb52"/><circle cx="6.500" cy="7" r="1.200" fill="#1b5c28"/><circle cx="12.500" cy="7" r="1.200" fill="#1b5c28"/><ellipse cx="16.500" cy="15.500" rx="7" ry="6.300" fill="#eee"/><circle cx="14" cy="14" r="1" fill="#666"/><circle cx="19" cy="14" r="1" fill="#666"/></svg></button>
    <button class="grid w-12 place-items-center border-b-[3px] border-[#8ea3c6]" aria-label="文件资源管理器"><svg class="size-6" viewBox="0 0 24 24"><path d="M1 3h9l2 3h11v15H1z" fill="#e8b43a"/><path d="M1 8h22v12H1z" fill="#f9d868"/><path d="M5 13h14v9h-4v-4H9v4H5z" fill="#3f91d6"/></svg></button>
    <button class="grid w-12 place-items-center border-b-[3px] border-[#8ea3c6]" aria-label="Navicat"><svg class="size-6" viewBox="0 0 24 24" fill="none" stroke="#dba637" stroke-width="1.800"><circle cx="13" cy="16" r="6.500"/><path d="M7 14C0 13 1 6 6 2c4-2 5 2 4 8M10 10c1-6 3-9 6-8 6 2 6 8 3 12"/></svg></button>
    <button class="grid w-12 place-items-center border-b-[3px] border-[#9db1d2] bg-[#704249]" aria-label="WPS"><svg class="size-6" viewBox="0 0 24 24"><path d="M0 3h5l4 13 3-9h4l-6 15H7z" fill="#e22b26"/><path d="M8 8h5l3 8 2.500-12h4l-4.500 18h-4z" fill="#f5543c"/><path d="M13 3h11l-1 4h-8z" fill="#c4170f"/></svg></button>
  </div>
  <div class="ml-auto flex items-center">
    <label for="address">地址</label>
    <div class="ml-[6px] flex h-[29px] w-[230px] items-center bg-white text-[#222]">
      <svg class="ml-[3px] size-4 shrink-0" viewBox="0 0 16 16"><path d="M1 1h8v14H1z" fill="#eeb63c"/><path d="M3 3h6l1 2v10H3z" fill="#fbdc7c"/></svg>
      <input id="address" value="Ems12" class="ml-1 w-0 flex-1 bg-transparent text-[13px] outline-none">
      <button aria-label="历史地址"><svg class="h-2 w-[10px]"><use href="#chev"/></svg></button>
      <span class="ml-3 h-full w-px bg-[#ddd]"></span>
      <button class="grid w-[30px] place-items-center" aria-label="转到"><svg class="h-[10px] w-3" viewBox="0 0 12 10" fill="none" stroke="#666" stroke-width="1.800"><path d="M0 5h10M6.500 1l4 4-4 4"/></svg></button>
    </div>
    <button class="ml-2 grid w-3 place-items-center" aria-label="显示隐藏的图标"><svg class="h-2 w-3 rotate-180"><use href="#chev"/></svg></button>
    <button class="ml-[10px]" aria-label="花朵"><svg class="size-4" viewBox="0 0 16 16"><g fill="#dcecf2"><circle cx="8" cy="3.500" r="3"/><circle cx="4" cy="6" r="3"/><circle cx="12" cy="6" r="3"/><circle cx="4.500" cy="11" r="3"/><circle cx="11.500" cy="11" r="3"/><circle cx="8" cy="13" r="2.500"/></g><circle cx="8" cy="8.500" r="1.500" fill="#86bdd5"/></svg></button>
    <button class="ml-2" aria-label="QQ"><svg class="size-4" viewBox="0 0 16 16"><ellipse cx="8" cy="8" rx="5" ry="7.500" fill="#111"/><path d="M4 7L.8 11l2 1zM12 7l3.200 4-2 1z" fill="#111"/><ellipse cx="8" cy="11" rx="3.800" ry="4" fill="#fff"/><circle cx="6.300" cy="3.500" r="1.300" fill="#fff"/><circle cx="9.700" cy="3.500" r="1.300" fill="#fff"/><path d="M5.500 5.500h5L8 7z" fill="#f2a61d"/><path d="M3 7q5 3 10 0v2q-5 2.500-10 0z" fill="#e23b32"/><path d="M3 14h4v2H3zM9 14h4v2H9z" fill="#f2a61d"/></svg></button>
    <button class="ml-2" aria-label="微信通知"><svg class="size-4" viewBox="0 0 16 16"><ellipse cx="6.500" cy="6" rx="6.300" ry="5.500" fill="#3ecb52"/><ellipse cx="11" cy="10.500" rx="5" ry="4.500" fill="#e8f3e8"/><circle cx="9.500" cy="10" r=".8" fill="#555"/><circle cx="12.500" cy="10" r=".8" fill="#555"/></svg></button>
    <button class="ml-2" aria-label="电池"><svg class="size-4" viewBox="0 0 16 16" fill="none" stroke="#fff"><path d="M6 5.500h8.500v7H4V10M15.500 7.500v3M1.500 1v3M5 1v3M.5 4h5.500v3q-2.500 2-5.500 0zM3 8v3"/><path d="M7.500 8h4.500v2H7.500z" fill="#fff"/></svg></button>
    <button class="ml-2" aria-label="静音"><svg class="size-4" viewBox="0 0 16 16" fill="none" stroke="#fff"><path d="M1 5.500h2.500L8 1.500v13l-4.500-4H1zM10.500 5.500l5 5M15.500 5.500l-5 5"/></svg></button>
    <button class="ml-2" aria-label="网络"><svg class="size-4" viewBox="0 0 16 16" fill="none" stroke="#fff"><path d="M2 15A12 12 0 0114 3.500M5.500 15A9 9 0 0114.500 7M8.500 15a6 6 0 016-5M11.500 15a3 3 0 013-2.500"/></svg></button>
    <button class="ml-2">中</button>
    <button class="ml-[13px]" aria-label="搜狗输入法"><svg class="size-4" viewBox="0 0 16 16"><rect width="16" height="16" rx="2" fill="#ef5a23"/><path d="M13 3Q4 2 4 5.500C4 8 12 7.500 12 10.500 12 13 6 13 3 12.500" fill="none" stroke="#fff" stroke-width="2.500"/></svg></button>
    <div class="ml-5 flex w-[94px] flex-col items-center gap-px whitespace-nowrap leading-[18px]"><span>19:00</span><span>2023/6/9 星期五</span></div>
    <button class="ml-5 mr-[11px]" aria-label="通知"><svg class="size-[18px]" viewBox="0 0 18 18" fill="none" stroke="#fff" stroke-width="1.200"><path d="M10 13H7l-3 3v-3H1V1h16v8M3.500 4.500h11M3.500 7.500h11M3.500 10.500h6M14 9v6.500"/><circle cx="12.500" cy="15.500" r="1.500"/></svg></button>
    <span class="ml-2 mr-[6px] h-10 w-px bg-white/30"></span>
  </div>
</div>

<!-- Input method bar floating over the window -->
<div class="absolute right-[5px] top-[593px] flex h-[38px] w-[119px] items-center bg-[#f9560a] text-[#fff3dd]">
  <span class="ml-1 h-[30px] w-px bg-[#ffc9a0]"></span>
  <button class="ml-3 pb-1 text-[15px] font-bold leading-5">中</button>
  <button class="ml-2" aria-label="标点"><svg class="h-4 w-3" viewBox="0 0 12 16" fill="none" stroke="currentColor" stroke-width="1.300"><circle cx="3" cy="4.500" r="2"/><path d="M10 9.500v2q-.5 2-2 2.500" stroke-width="2"/></svg></button>
  <button class="ml-2" aria-label="半角"><svg class="size-3" viewBox="0 0 12 12"><path d="M7 0q3 6-7 8c3 5 11 4 12-2C12 3 10 1 7 0z" fill="currentColor"/></svg></button>
  <button class="ml-[10px]" aria-label="搜狗"><svg class="h-7 w-8" viewBox="0 0 32 28"><path d="M28 5C17 2 5 4 5 9.500c0 6 21 3 21 9C26 24 15 25 6 23" fill="none" stroke="#fff" stroke-width="6"/></svg></button>
</div>

<!-- Watermarks -->
<div class="pointer-events-none absolute inset-0 select-none overflow-hidden font-['Noto_Sans',sans-serif] text-[29px] leading-[40px] text-black/25">
  <span class="absolute left-[90px] top-[53px]">code51.cn</span>
  <span class="absolute left-[730px] top-[53px]">code51.cn</span>
  <span class="absolute left-[1370px] top-[53px]">code51.cn</span>
  <span class="absolute left-[410px] top-[203px]">code51.cn</span>
  <span class="absolute left-[1050px] top-[203px]">code51.cn</span>
  <span class="absolute left-[90px] top-[353px]">code51.cn</span>
  <span class="absolute left-[730px] top-[353px]">code51.cn</span>
  <span class="absolute left-[1370px] top-[353px]">code51.cn</span>
  <span class="absolute left-[410px] top-[503px]">code51.cn</span>
  <span class="absolute left-[1050px] top-[503px]">code51.cn</span>
  <span class="absolute left-[90px] top-[653px]">code51.cn</span>
  <span class="absolute left-[730px] top-[653px]">code51.cn</span>
  <span class="absolute left-[1370px] top-[653px]">code51.cn</span>
  <span class="absolute left-[410px] top-[803px]">code51.cn</span>
  <span class="absolute left-[1050px] top-[803px]">code51.cn</span>
  <span class="absolute left-[514px] top-[430px] whitespace-nowrap font-['Noto_Sans','Noto_Sans_CJK_SC',sans-serif] text-[44px] font-medium leading-[60px] text-[#c80a0e]"><span class="text-[42px]">code51. cn-</span>源码乐园盗图必究</span>
</div>
</div>

<script>
  // Horizontal ruler: every labelled unit sits between two ticks.
  const marks = [6, 4, 2, '', ...Array.from({ length: 23 }, (_, i) => (i + 1) * 2)];
  document.getElementById('hruler').innerHTML = marks.map(n =>
    `<div class="flex flex-1 justify-center"><span class="flex h-[10px] w-4 justify-center border-x border-[#9a9eab]"><span class="-mt-1">${n}</span></span></div>`).join('');
  // Vertical ruler: one cell per unit, the last one cut by the status bar.
  const units = Array.from({ length: 26 }, (_, i) => i + 1);
  document.getElementById('vruler').innerHTML = units.map(n =>
    `<span class="grid min-h-0 flex-[2] place-items-center -rotate-90">${n}</span>`).join('') +
    `<span class="grid min-h-0 flex-1 place-items-center -rotate-90">27</span>`;
</script>
</body>
</html>
